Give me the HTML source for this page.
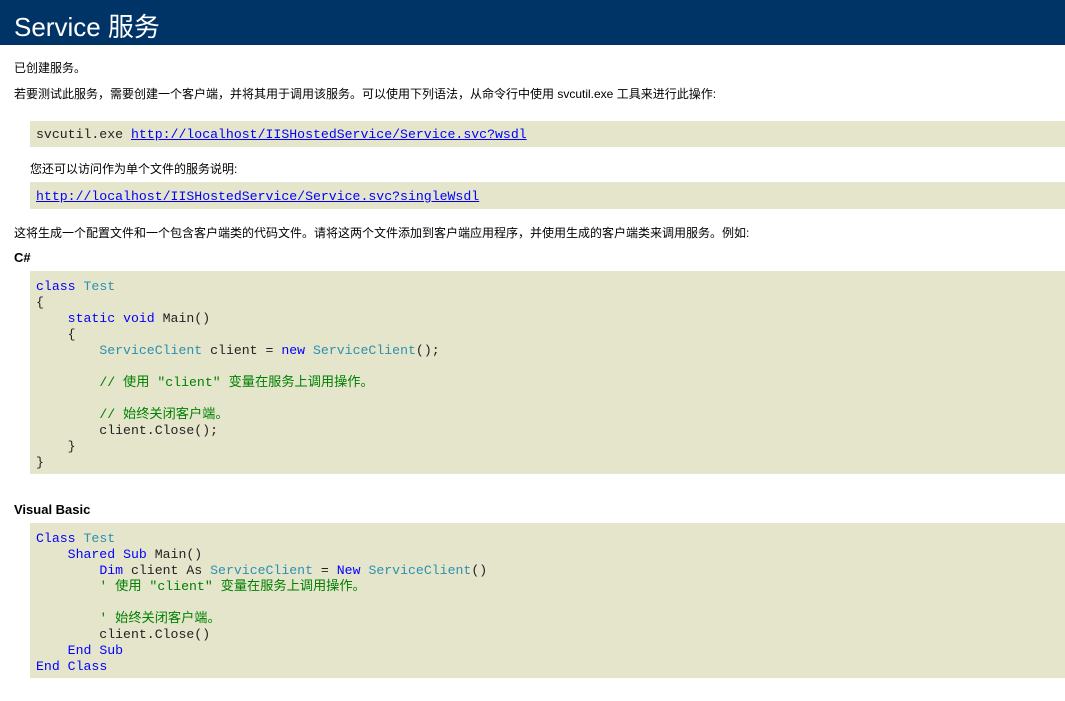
<!DOCTYPE html>
<html><head><meta charset="utf-8"><style>
html,body{margin:0;padding:0;background:#fff;width:1065px;height:701px;overflow:hidden;position:relative}
body{font-family:"Liberation Sans","Noto Sans CJK SC",sans-serif;font-size:12px;color:#000}
.hd{position:absolute;left:0;top:0;width:1065px;height:45px;background:#003366;color:#fff}
.hd span{position:absolute;left:14px;top:11px;font-size:26px;line-height:32px;font-family:"Liberation Sans","Noto Sans CJK SC",sans-serif}
.t{position:absolute;line-height:16px;white-space:nowrap}
.b{position:absolute;left:30px;right:0;background:#e5e5cc}
pre{position:absolute;left:36px;margin:0;font-family:"Liberation Mono","Noto Sans CJK SC",monospace;font-size:13.2px;line-height:16px;color:#222}
a{color:#0000ff;text-decoration:underline}
.k{color:#0000ff}.ty{color:#2b91af}.c{color:#008000}
h4{margin:0;font-size:13px;font-weight:bold}
</style></head><body>
<div class="hd"><span>Service 服务</span></div>
<div class="t" style="left:14px;top:60px">已创建服务。</div>
<div class="t" style="left:14px;top:86px">若要测试此服务，需要创建一个客户端，并将其用于调用该服务。可以使用下列语法，从命令行中使用 svcutil.exe 工具来进行此操作:</div>
<div class="b" style="top:121px;height:26px"></div>
<pre style="top:127px">svcutil.exe <a>http://localhost/IISHostedService/Service.svc?wsdl</a></pre>
<div class="t" style="left:30px;top:161px">您还可以访问作为单个文件的服务说明:</div>
<div class="b" style="top:182px;height:27px"></div>
<pre style="top:189px"><a>http://localhost/IISHostedService/Service.svc?singleWsdl</a></pre>
<div class="t" style="left:14px;top:225px">这将生成一个配置文件和一个包含客户端类的代码文件。请将这两个文件添加到客户端应用程序，并使用生成的客户端类来调用服务。例如:</div>
<div class="t" style="left:14px;top:250px"><h4>C#</h4></div>
<div class="b" style="top:271px;height:203px"></div>
<pre style="top:279px"><span class="k">class</span> <span class="ty">Test</span>
{
    <span class="k">static</span> <span class="k">void</span> Main()
    {
        <span class="ty">ServiceClient</span> client = <span class="k">new</span> <span class="ty">ServiceClient</span>();

        <span class="c">// 使用 "client" 变量在服务上调用操作。</span>

        <span class="c">// 始终关闭客户端。</span>
        client.Close();
    }
}</pre>
<div class="t" style="left:14px;top:502px"><h4>Visual Basic</h4></div>
<div class="b" style="top:523px;height:155px"></div>
<pre style="top:531px"><span class="k">Class</span> <span class="ty">Test</span>
    <span class="k">Shared</span> <span class="k">Sub</span> Main()
        <span class="k">Dim</span> client As <span class="ty">ServiceClient</span> = <span class="k">New</span> <span class="ty">ServiceClient</span>()
        <span class="c">' 使用 "client" 变量在服务上调用操作。</span>

        <span class="c">' 始终关闭客户端。</span>
        client.Close()
    <span class="k">End</span> <span class="k">Sub</span>
<span class="k">End</span> <span class="k">Class</span></pre>
</body></html>
